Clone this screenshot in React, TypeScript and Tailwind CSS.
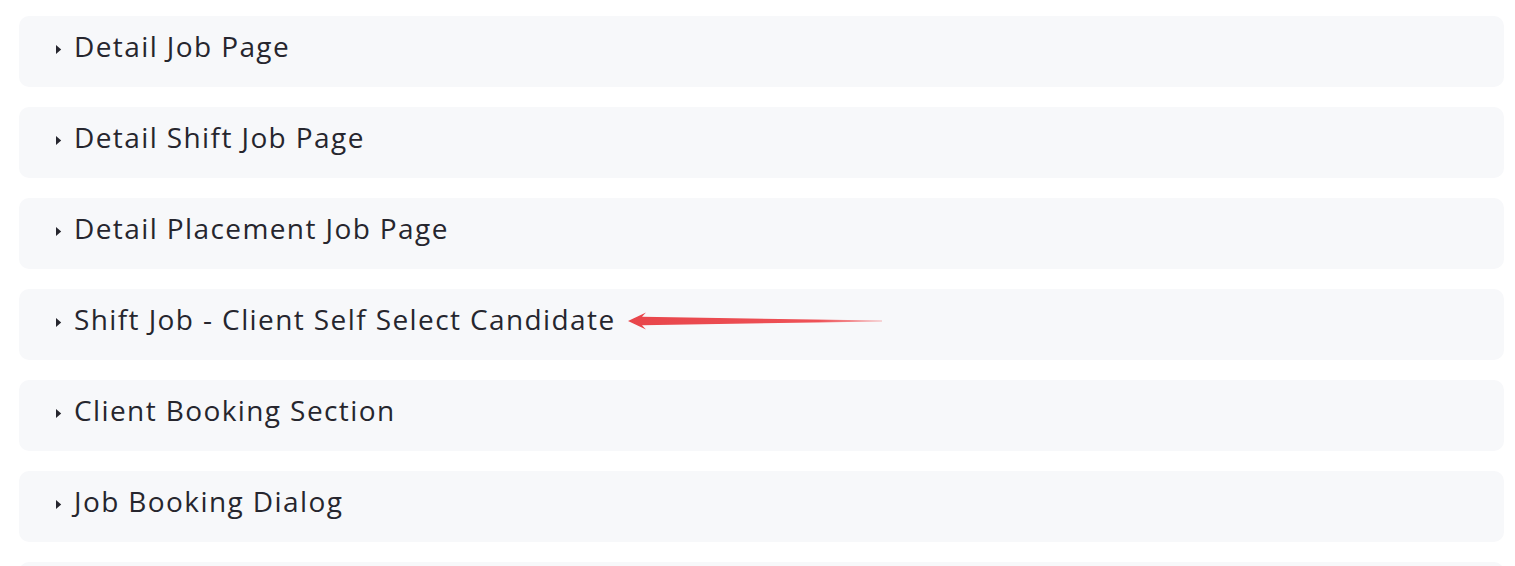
const items = [
  'Detail Job Page',
  'Detail Shift Job Page',
  'Detail Placement Job Page',
  'Shift Job - Client Self Select Candidate',
  'Client Booking Section',
  'Job Booking Dialog',
  '',
];

function Caret() {
  return (
    <svg width="7" height="11" viewBox="0 0 7 11" className="shrink-0 mt-[6px]">
      <path d="M1 1 L6.2 5.5 L1 10 Z" fill="#26262e" />
    </svg>
  );
}

function Arrow() {
  return (
    <svg width="256" height="18" viewBox="0 0 256 18" className="ml-[12px] mt-[4px] shrink-0">
      <defs>
        <linearGradient id="tail" x1="0" x2="1" y1="0" y2="0">
          <stop offset="0" stopColor="#e8464b" />
          <stop offset="0.75" stopColor="#ee5156" />
          <stop offset="1" stopColor="#f49396" stopOpacity="0.7" />
        </linearGradient>
      </defs>
      <path
        d="M0 9 L18 0.5 L14 4.8 L254 8.5 L254 9.4 L14 13.3 L18 17.5 Z"
        fill="url(#tail)"
      />
    </svg>
  );
}

export default function App() {
  return (
    <div className="bg-white pt-[16px] pl-[19px] pr-[11px] font-['Open_Sans',sans-serif] overflow-hidden h-[566px]">
      <div className="flex flex-col gap-[20px]">
        {items.map((item, i) => (
          <div
            key={i}
            className="flex items-center h-[71px] shrink-0 rounded-[10px] bg-[#f7f8fa] pl-[36px] pb-[11px]"
          >
            {item && <Caret />}
            {item && (
              <span className="ml-[12px] text-[28px] leading-none text-[#26262e] tracking-[1.4px]">
                {item}
              </span>
            )}
            {i === 3 && <Arrow />}
          </div>
        ))}
      </div>
    </div>
  );
}
